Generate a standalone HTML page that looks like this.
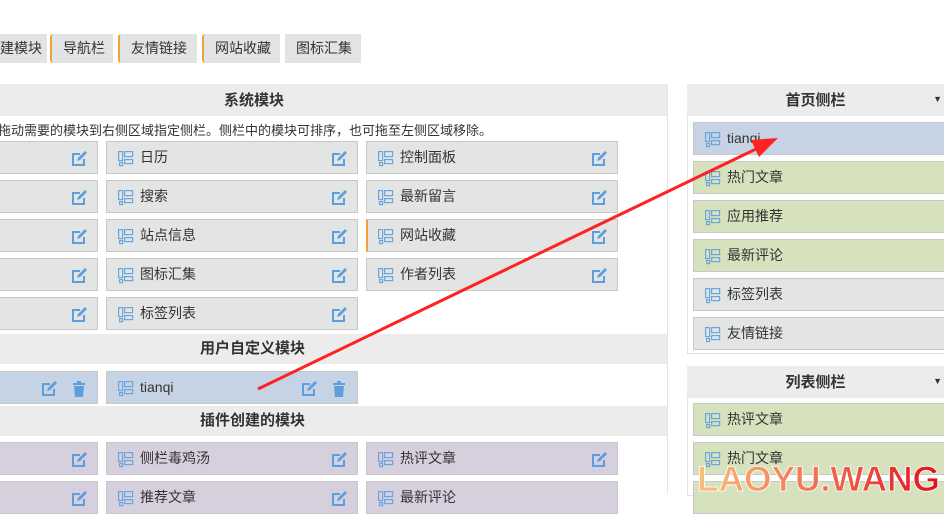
<!DOCTYPE html>
<html><head><meta charset="utf-8"><style>
*{margin:0;padding:0;box-sizing:border-box}
body{width:944px;height:494px;overflow:hidden;background:#fff;position:relative;font-family:"Liberation Sans","Noto Sans CJK SC",sans-serif;color:#333;font-size:14px}
.a{position:absolute}
.tab{position:absolute;top:34px;height:29px;background:#e2e3e4;line-height:29px;font-size:14px;color:#333;padding-left:11px}
.tab.o{border-left:2px solid #f4a03f;border-radius:3px 0 0 3px}
.hd{position:absolute;background:#ececec;font-weight:bold;font-size:15px;text-align:center;color:#333}
.c{position:absolute;height:33px;border:1px solid #c8c8c8;background:#e3e4e4;line-height:31px}
.c.b{background:#c6d3e5}.c.p{background:#d6cfde}.c.g{background:#d6e2bd}
.c .t{position:absolute;left:33px;top:0}
.mi{position:absolute;left:11px;top:9px}
.ed{position:absolute;top:8px}
</style></head><body>
<svg width="0" height="0" style="position:absolute"><defs>
<symbol id="m" viewBox="0 0 16 16"><g fill="none" stroke="#6aa5dc" stroke-width="1.2"><rect x="0.6" y="0.6" width="4" height="9"/><rect x="1.6" y="11.6" width="3" height="3"/><rect x="6.6" y="0.6" width="8" height="5"/><rect x="6.6" y="8.6" width="8" height="4"/></g></symbol>
<symbol id="e" viewBox="0 0 18 18"><path d="M2 3h8v2H4v9h9V9h2v7H2z" fill="#5d9fdc"/><path d="M7 11l1-3 7-7 2 2-7 7z" fill="#5d9fdc"/></symbol>
<symbol id="d" viewBox="0 0 14 18"><path d="M1 3h12v2H1zM5 1h4v2H5zM2 6h10l-1 11H3z" fill="#5d9fdc"/></symbol>
</defs></svg>

<div class="tab" style="left:-10px;width:57px;padding-left:10px">建模块</div>
<div class="tab o" style="left:50px;width:63px">导航栏</div>
<div class="tab o" style="left:118px;width:79px">友情链接</div>
<div class="tab o" style="left:202px;width:78px">网站收藏</div>
<div class="tab" style="left:285px;width:76px">图标汇集</div>

<div class="a" style="left:0;top:84px;width:668px;height:410px;border-right:1px solid #e6e6e6"></div>
<div class="hd" style="left:0;top:84px;width:667px;height:32px;line-height:34px;padding-left:0;text-align:left"><span style="position:absolute;left:224px">系统模块</span></div>
<div class="a" style="left:-2px;top:120px;font-size:13px;color:#333">拖动需要的模块到右侧区域指定侧栏。侧栏中的模块可排序，也可拖至左侧区域移除。</div>

<div class="c" style="left:-5px;top:141px;width:103px"><svg class="ed" style="left:74px" width="18" height="18"><use href="#e"/></svg></div>
<div class="c" style="left:106px;top:141px;width:252px"><svg class="mi" width="16" height="16"><use href="#m"/></svg><span class="t">日历</span><svg class="ed" style="left:223px" width="18" height="18"><use href="#e"/></svg></div>
<div class="c" style="left:366px;top:141px;width:252px"><svg class="mi" width="16" height="16"><use href="#m"/></svg><span class="t">控制面板</span><svg class="ed" style="left:223px" width="18" height="18"><use href="#e"/></svg></div>

<div class="c" style="left:-5px;top:180px;width:103px"><svg class="ed" style="left:74px" width="18" height="18"><use href="#e"/></svg></div>
<div class="c" style="left:106px;top:180px;width:252px"><svg class="mi" width="16" height="16"><use href="#m"/></svg><span class="t">搜索</span><svg class="ed" style="left:223px" width="18" height="18"><use href="#e"/></svg></div>
<div class="c" style="left:366px;top:180px;width:252px"><svg class="mi" width="16" height="16"><use href="#m"/></svg><span class="t">最新留言</span><svg class="ed" style="left:223px" width="18" height="18"><use href="#e"/></svg></div>

<div class="c" style="left:-5px;top:219px;width:103px"><svg class="ed" style="left:74px" width="18" height="18"><use href="#e"/></svg></div>
<div class="c" style="left:106px;top:219px;width:252px"><svg class="mi" width="16" height="16"><use href="#m"/></svg><span class="t">站点信息</span><svg class="ed" style="left:223px" width="18" height="18"><use href="#e"/></svg></div>
<div class="c" style="left:366px;top:219px;width:252px;border-left:2px solid #f4a03f"><svg class="mi" style="left:10px" width="16" height="16"><use href="#m"/></svg><span class="t" style="left:32px">网站收藏</span><svg class="ed" style="left:222px" width="18" height="18"><use href="#e"/></svg></div>

<div class="c" style="left:-5px;top:258px;width:103px"><svg class="ed" style="left:74px" width="18" height="18"><use href="#e"/></svg></div>
<div class="c" style="left:106px;top:258px;width:252px"><svg class="mi" width="16" height="16"><use href="#m"/></svg><span class="t">图标汇集</span><svg class="ed" style="left:223px" width="18" height="18"><use href="#e"/></svg></div>
<div class="c" style="left:366px;top:258px;width:252px"><svg class="mi" width="16" height="16"><use href="#m"/></svg><span class="t">作者列表</span><svg class="ed" style="left:223px" width="18" height="18"><use href="#e"/></svg></div>

<div class="c" style="left:-5px;top:297px;width:103px"><svg class="ed" style="left:74px" width="18" height="18"><use href="#e"/></svg></div>
<div class="c" style="left:106px;top:297px;width:252px"><svg class="mi" width="16" height="16"><use href="#m"/></svg><span class="t">标签列表</span><svg class="ed" style="left:223px" width="18" height="18"><use href="#e"/></svg></div>

<div class="hd" style="left:0;top:334px;width:667px;height:30px;line-height:30px;text-align:left"><span style="position:absolute;left:200px">用户自定义模块</span></div>
<div class="c b" style="left:-5px;top:371px;width:103px"><svg class="ed" style="left:44px" width="18" height="18"><use href="#e"/></svg><svg class="ed" style="left:76px" width="14" height="18"><use href="#d"/></svg></div>
<div class="c b" style="left:106px;top:371px;width:252px"><svg class="mi" width="16" height="16"><use href="#m"/></svg><span class="t">tianqi</span><svg class="ed" style="left:193px" width="18" height="18"><use href="#e"/></svg><svg class="ed" style="left:225px" width="14" height="18"><use href="#d"/></svg></div>

<div class="hd" style="left:0;top:406px;width:667px;height:30px;line-height:30px;text-align:left"><span style="position:absolute;left:200px">插件创建的模块</span></div>
<div class="c p" style="left:-5px;top:442px;width:103px"><svg class="ed" style="left:74px" width="18" height="18"><use href="#e"/></svg></div>
<div class="c p" style="left:106px;top:442px;width:252px"><svg class="mi" width="16" height="16"><use href="#m"/></svg><span class="t">侧栏毒鸡汤</span><svg class="ed" style="left:223px" width="18" height="18"><use href="#e"/></svg></div>
<div class="c p" style="left:366px;top:442px;width:252px"><svg class="mi" width="16" height="16"><use href="#m"/></svg><span class="t">热评文章</span><svg class="ed" style="left:223px" width="18" height="18"><use href="#e"/></svg></div>
<div class="c p" style="left:-5px;top:481px;width:103px"><svg class="ed" style="left:74px" width="18" height="18"><use href="#e"/></svg></div>
<div class="c p" style="left:106px;top:481px;width:252px"><svg class="mi" width="16" height="16"><use href="#m"/></svg><span class="t">推荐文章</span><svg class="ed" style="left:223px" width="18" height="18"><use href="#e"/></svg></div>
<div class="c p" style="left:366px;top:481px;width:252px"><svg class="mi" width="16" height="16"><use href="#m"/></svg><span class="t">最新评论</span></div>

<div class="a" style="left:687px;top:84px;width:260px;height:270px;border:1px solid #e4e4e4"></div>
<div class="hd" style="left:687px;top:84px;width:257px;height:32px;line-height:34px">首页侧栏<span style="position:absolute;right:2px;top:-2px;font-size:9px">▼</span></div>
<div class="c b" style="left:693px;top:122px;width:255px"><svg class="mi" width="16" height="16"><use href="#m"/></svg><span class="t">tianqi</span></div>
<div class="c g" style="left:693px;top:161px;width:255px"><svg class="mi" width="16" height="16"><use href="#m"/></svg><span class="t">热门文章</span></div>
<div class="c g" style="left:693px;top:200px;width:255px"><svg class="mi" width="16" height="16"><use href="#m"/></svg><span class="t">应用推荐</span></div>
<div class="c g" style="left:693px;top:239px;width:255px"><svg class="mi" width="16" height="16"><use href="#m"/></svg><span class="t">最新评论</span></div>
<div class="c" style="left:693px;top:278px;width:255px"><svg class="mi" width="16" height="16"><use href="#m"/></svg><span class="t">标签列表</span></div>
<div class="c" style="left:693px;top:317px;width:255px"><svg class="mi" width="16" height="16"><use href="#m"/></svg><span class="t">友情链接</span></div>

<div class="a" style="left:687px;top:366px;width:260px;height:130px;border:1px solid #e4e4e4"></div>
<div class="hd" style="left:687px;top:366px;width:257px;height:32px;line-height:34px">列表侧栏<span style="position:absolute;right:2px;top:-2px;font-size:9px">▼</span></div>
<div class="c g" style="left:693px;top:403px;width:255px"><svg class="mi" width="16" height="16"><use href="#m"/></svg><span class="t">热评文章</span></div>
<div class="c g" style="left:693px;top:442px;width:255px"><svg class="mi" width="16" height="16"><use href="#m"/></svg><span class="t">热门文章</span></div>
<div class="c g" style="left:693px;top:481px;width:255px"></div>

<svg class="a" style="left:0;top:0" width="944" height="494">
<line x1="258" y1="389" x2="756" y2="149" stroke="#f22" stroke-width="3"/>
<polygon points="778,138 751,140 759,157" fill="#f22"/>
<defs><linearGradient id="w" x1="0" x2="1"><stop offset="0" stop-color="#fbbf7a"/><stop offset="0.5" stop-color="#f07050"/><stop offset="1" stop-color="#e01020"/></linearGradient></defs>
<text x="697" y="491" font-family="Liberation Sans" font-weight="bold" font-size="35" fill="url(#w)" stroke="#fff" stroke-width="0.8" textLength="243" lengthAdjust="spacingAndGlyphs">LAOYU.WANG</text>
</svg>
</body></html>
